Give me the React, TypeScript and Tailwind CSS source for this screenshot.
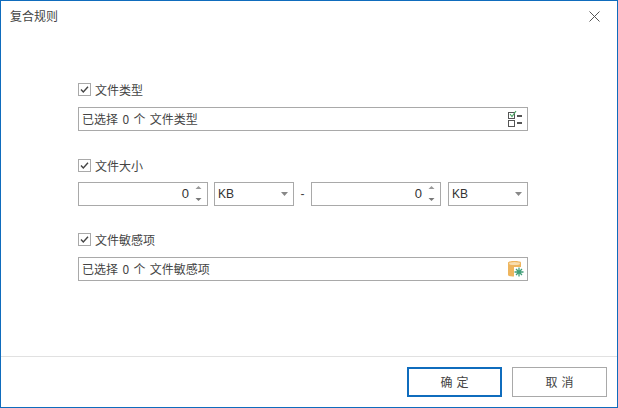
import React from "react";

const font = { fontFamily: '"Noto Sans CJK SC", "Liberation Sans", sans-serif' };

function Check({ label }: { label: string }) {
  return (
    <div className="flex h-[13px] items-center">
      <div className="flex h-[13px] w-[13px] items-center justify-center border border-[#a9a9a9] bg-white">
        <svg width="11" height="11" viewBox="0 0 11 11">
          <path d="M2 5.5 L4.3 8 L9 2.8" fill="none" stroke="#444" strokeWidth="1.4" />
        </svg>
      </div>
      <span className="ml-[4px] text-[12px] leading-[13px] text-[#444]">{label}</span>
    </div>
  );
}

function TextBox({ label, children }: { label: string; children: React.ReactNode }) {
  return (
    <div className="mt-[11px] flex h-[24px] w-[450px] items-center justify-between border border-[#a9a9a9] pl-[3px] pr-[1px]">
      <span className="text-[12px] leading-[22px] text-[#444] [word-spacing:1.7px]">{label}</span>
      {children}
    </div>
  );
}

function Spin() {
  return (
    <div className="flex h-[24px] w-[130px] items-center justify-end border border-[#a9a9a9] pr-[4px]">
      <span className="mr-[5px] font-['Liberation_Sans'] text-[13px] leading-[22px] text-[#333]">0</span>
      <svg width="9" height="18" viewBox="0 0 9 18">
        <path d="M4.5 1 L7.5 4 H1.5 Z" fill="#999" />
        <path d="M1.5 13 H7.5 L4.5 16 Z" fill="#777" />
      </svg>
    </div>
  );
}

function Unit() {
  return (
    <div className="flex h-[24px] w-[80px] items-center justify-between border border-[#a9a9a9] pl-[3px] pr-[5px]">
      <span className="font-['Liberation_Sans'] text-[12px] leading-[22px] text-[#333]">KB</span>
      <svg width="7" height="4" viewBox="0 0 7 4">
        <path d="M0 0 H7 L3.5 4 Z" fill="#888" />
      </svg>
    </div>
  );
}

export default function App() {
  return (
    <div style={font} className="flex h-[408px] w-[618px] flex-col border border-[#0f6cbd] bg-white">
      <div className="flex h-[30px] items-center justify-between pl-[9px] pr-[17px]">
        <span className="text-[12px] leading-[30px] text-[#444]">复合规则</span>
        <svg width="11" height="11" viewBox="0 0 11 11">
          <path d="M0.5 0.5 L10.5 10.5 M10.5 0.5 L0.5 10.5" stroke="#555" strokeWidth="1" fill="none" />
        </svg>
      </div>
      <div className="flex flex-1 flex-col pl-[77px] pt-[52px]">
        <Check label="文件类型" />
        <TextBox label="已选择 0 个 文件类型">
          <svg width="20" height="18" viewBox="0 0 20 18">
            <rect x="2.5" y="2.5" width="6" height="6" fill="none" stroke="#555" />
            <path d="M4 4 L6 6.5 L10 1" fill="none" stroke="#4aa564" strokeWidth="1.2" />
            <rect x="2.5" y="10.5" width="6" height="6" fill="none" stroke="#555" />
            <rect x="11" y="5" width="5" height="2" fill="#555" />
            <rect x="11" y="12" width="5" height="2" fill="#555" />
          </svg>
        </TextBox>
        <div className="mt-[28px]">
          <Check label="文件大小" />
        </div>
        <div className="mt-[10px] flex w-[450px] items-center">
          <Spin />
          <div className="ml-[6px]">
            <Unit />
          </div>
          <span className="w-[17px] text-center font-['Liberation_Sans'] text-[12px] text-[#444]">-</span>
          <Spin />
          <div className="ml-[7px]">
            <Unit />
          </div>
        </div>
        <div className="mt-[27px]">
          <Check label="文件敏感项" />
        </div>
        <TextBox label="已选择 0 个 文件敏感项">
          <svg width="20" height="20" viewBox="0 0 20 20">
            <path d="M2 3.5 C2 1.5 15 1.5 15 3.5 V16 C15 18 2 18 2 16 Z" fill="#eeb55e" />
            <ellipse cx="8.5" cy="4.5" rx="5.5" ry="1.5" fill="#f8deb0" />
            <rect x="8" y="8" width="10" height="10" fill="#fff" />
            <path d="M13 8.5 V17.5 M8.5 13 H17.5 M10 10 L16 16 M16 10 L10 16" stroke="#3f9e78" strokeWidth="1.3" fill="none" />
          </svg>
        </TextBox>
      </div>
      <div className="flex h-[51px] items-start justify-end gap-[10px] border-t border-[#e1e1e1] pr-[10px] pt-[10px]">
        <div className="flex h-[30px] w-[95px] items-center justify-center border-2 border-[#0f6cbd] pl-[4px] text-[12px] tracking-[4px] text-[#444]">
          确定
        </div>
        <div className="flex h-[30px] w-[95px] items-center justify-center border border-[#a9a9a9] pl-[4px] text-[12px] tracking-[4px] text-[#444]">
          取消
        </div>
      </div>
    </div>
  );
}
